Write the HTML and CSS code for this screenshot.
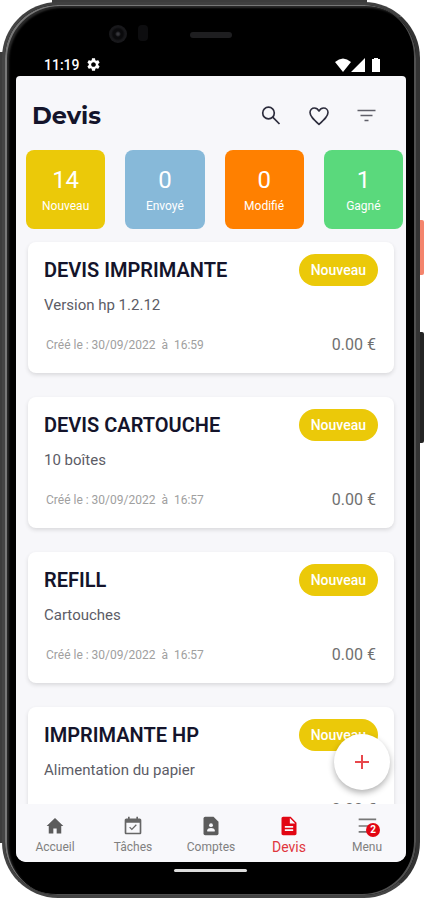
FILE: index.html
```html
<!DOCTYPE html>
<html lang="fr">
<head>
<meta charset="utf-8">
<meta name="viewport" content="width=device-width, initial-scale=1">
<title>Devis</title>
<link rel="stylesheet" href="styles.css">
</head>
<body>
<div class="device">
  <span class="side-key power"></span>
  <span class="side-key volume"></span>
  <div class="phone">
    <div class="bezel-top">
      <span class="camera"></span>
      <span class="sensor"></span>
      <span class="speaker"></span>
    </div>
    <div class="status">
      <span>11:19</span>
      <svg class="gear" viewBox="2 2 20 20" aria-hidden="true"><path fill="#fff" d="M19.14 12.94c.04-.3.06-.61.06-.94 0-.32-.02-.64-.07-.94l2.03-1.58c.18-.14.23-.41.12-.61l-1.92-3.32c-.12-.22-.37-.29-.59-.22l-2.39.96c-.5-.38-1.03-.7-1.62-.94l-.36-2.54c-.04-.24-.24-.41-.48-.41h-3.84c-.24 0-.43.17-.47.41l-.36 2.54c-.59.24-1.13.57-1.62.94l-2.39-.96c-.22-.08-.47 0-.59.22L2.74 8.87c-.12.21-.08.47.12.61l2.03 1.58c-.05.3-.09.63-.09.94s.02.64.07.94l-2.03 1.58c-.18.14-.23.41-.12.61l1.92 3.32c.12.22.37.29.59.22l2.39-.96c.5.38 1.03.7 1.62.94l.36 2.54c.05.24.24.41.48.41h3.84c.24 0 .44-.17.47-.41l.36-2.54c.59-.24 1.13-.56 1.62-.94l2.39.96c.22.08.47 0 .59-.22l1.92-3.32c.12-.22.07-.47-.12-.61l-2.01-1.58zM12 15.6c-1.980 0-3.600-1.620-3.600-3.600s1.620-3.600 3.600-3.600 3.600 1.620 3.600 3.600-1.620 3.600-3.600 3.600z"/></svg>
      <svg class="signals" viewBox="0 0 46 14" aria-hidden="true"><path fill="#fff" d="M0 4Q8-3 16 4L8 14zM30 0v14H16zM37 1h2V0h4v1h2v13h-8V1z"/></svg>
    </div>
    <div class="screen">
      <header class="bar">
        <h1>Devis</h1>
        <button type="button" class="tool" aria-label="Rechercher"><svg viewBox="0 0 24 24"><g fill="none" stroke="#2c2c3c" stroke-width="1.700"><circle cx="9.500" cy="9" r="5.800"/><path d="M13.700 13.200l6.800 6.800"/></g></svg></button>
        <button type="button" class="tool" aria-label="Favoris"><svg viewBox="0 0 24 24"><path fill="none" stroke="#2c2c3c" stroke-width="1.600" stroke-linejoin="round" d="M12 20.300C6.500 15.400 3 12.200 3 8.400 3 5.900 5 4 7.400 4 9.400 4 11 5.200 12 7c1-1.800 2.600-3 4.600-3C19 4 21 5.900 21 8.400c0 3.800-3.500 7-9 11.900z"/></svg></button>
        <button type="button" class="tool" aria-label="Filtrer"><svg viewBox="0 0 24 24"><path fill="none" stroke="#5f5f69" stroke-width="1.500" d="M2.500 6.500h18M5.500 11.500h12M9.500 16.500h4"/></svg></button>
      </header>
      <div class="tiles">
        <button type="button" class="tile yellow"><strong>14</strong><span>Nouveau</span></button>
        <button type="button" class="tile blue"><strong>0</strong><span>Envoyé</span></button>
        <button type="button" class="tile orange"><strong>0</strong><span>Modifié</span></button>
        <button type="button" class="tile green"><strong>1</strong><span>Gagné</span></button>
      </div>
      <main class="list">
        <article class="card">
          <div class="row"><h2>DEVIS IMPRIMANTE</h2><span class="pill">Nouveau</span></div>
          <p class="desc">Version hp 1.2.12</p>
          <div class="row foot"><span class="date">Créé le : 30/09/2022&nbsp; à&nbsp; 16:59</span><span class="price">0.00 €</span></div>
        </article>
        <article class="card">
          <div class="row"><h2>DEVIS CARTOUCHE</h2><span class="pill">Nouveau</span></div>
          <p class="desc">10 boîtes</p>
          <div class="row foot"><span class="date">Créé le : 30/09/2022&nbsp; à&nbsp; 16:57</span><span class="price">0.00 €</span></div>
        </article>
        <article class="card">
          <div class="row"><h2>REFILL</h2><span class="pill">Nouveau</span></div>
          <p class="desc">Cartouches</p>
          <div class="row foot"><span class="date">Créé le : 30/09/2022&nbsp; à&nbsp; 16:57</span><span class="price">0.00 €</span></div>
        </article>
        <article class="card">
          <div class="row"><h2>IMPRIMANTE HP</h2><span class="pill">Nouveau</span></div>
          <p class="desc">Alimentation du papier</p>
          <div class="row foot"><span></span><span class="price">0.00 €</span></div>
        </article>
      </main>
      <nav class="tabs">
        <button type="button" class="fab" aria-label="Ajouter un devis"><svg viewBox="0 0 16 16"><path fill="none" stroke="#e8474c" stroke-width="2" d="M8 1v14M1 8h14"/></svg></button>
        <a href="#accueil"><svg viewBox="0 0 24 24"><path fill="#5c5c5c" d="M10 21v-6h4v6h5.500v-9H22L12 2.500 2 12h2.500v9z"/></svg><span>Accueil</span></a>
        <a href="#taches"><svg viewBox="0 0 24 24"><path fill="#666" d="M16.530 11.060L15.470 10l-4.880 4.880-2.120-2.120-1.060 1.060L10.590 17l5.940-5.940zM20 3h-2V1h-2v2H8V1H6v2H4c-1.110 0-1.990.9-1.990 2L2 20c0 1.100.89 2 2 2h16c1.100 0 2-.9 2-2V5c0-1.100-.9-2-2-2zm0 17H4V8h16v12z"/></svg><span>Tâches</span></a>
        <a href="#comptes"><svg viewBox="0 0 24 24"><path fill="#5c5c5c" d="M5 1h10l6 6v14a2 2 0 0 1-2 2H5a2 2 0 0 1-2-2V3a2 2 0 0 1 2-2z"/><circle cx="12" cy="11" r="2.300" fill="#f8f8fb"/><path fill="#f8f8fb" d="M7.500 18.500v-1.400c0-1.700 2.500-2.700 4.500-2.700s4.500 1 4.500 2.700v1.400z"/></svg><span>Comptes</span></a>
        <a href="#devis" class="active"><svg viewBox="0 0 24 24"><path fill="#e20613" d="M14 1H5c-1.100 0-2 .9-2 2v18c0 1.100.89 2 2 2h14c1.100 0 2-.9 2-2V8l-7-7zm3 17H7v-2h10v2zm0-4H7v-2h10v2zm-4-5V2.500L19.500 9H13z"/></svg><span>Devis</span></a>
        <a href="#menu"><span class="badged"><svg viewBox="0 0 24 24"><path fill="#777" d="M2 3h21v2H2zm0 8h21v2H2zm0 7h16v2H2z"/></svg><b class="count">2</b></span><span>Menu</span></a>
      </nav>
    </div>
    <div class="gesture"><span></span></div>
  </div>
</div>
</body>
</html>
```
FILE: styles.css
```css
* {
  box-sizing: border-box;
}

body {
  margin: 0;
  background: #fff;
  font-family: Roboto, "Liberation Sans", sans-serif;
  color: #14142b;
}

h1, h2, p {
  margin: 0;
}

button {
  border: 0;
  padding: 0;
  font-family: inherit;
  background: none;
  cursor: pointer;
}

svg {
  display: block;
}

.device {
  position: relative;
  height: 100vh;
  padding: 2px 4px 2px 2px;
}

/* Edges of the casing that show behind the frame */
.device::before,
.device::after {
  content: "";
  position: absolute;
  background: #3c3c3c;
}

.device::before {
  left: 0;
  top: 52px;
  bottom: 57px;
  width: 40px;
}

.device::after {
  left: 52px;
  right: 57px;
  top: 0;
  height: 20px;
}

.side-key {
  position: absolute;
  right: 0;
  width: 8px;
  border-radius: 2px;
}

.power {
  top: 220px;
  height: 55px;
  background: #f4846c;
}

.volume {
  top: 332px;
  height: 111px;
  background: #242424;
}

.phone {
  position: relative;
  z-index: 1;
  height: 100%;
  display: flex;
  flex-direction: column;
  padding: 0 7px 0 7px;
  border: 3px solid #444;
  border-top-color: #404040;
  border-right: 4px solid #333;
  border-radius: 56px;
  background: #000;
  box-shadow: inset 2px 1px 0 #777, inset -2px -1px 0 #505050, inset 4px 3px 2px #2a2a2a;
}

.bezel-top {
  position: relative;
  flex: none;
  height: 48px;
}

.camera {
  position: absolute;
  left: 97px;
  top: 20px;
  width: 18px;
  height: 18px;
  border-radius: 50%;
  background: radial-gradient(circle, #37373c 0 1px, #0a0a0c 3px 5px, #18181b 7px);
}

.sensor {
  position: absolute;
  left: 126px;
  top: 20px;
  width: 10px;
  height: 16px;
  border-radius: 4px;
  background: #0d0d0f;
}

.speaker {
  position: absolute;
  top: 27px;
  left: 178px;
  width: 42px;
  height: 6px;
  border-radius: 3px;
  background: #1e1e20;
}

.status {
  flex: none;
  display: flex;
  align-items: center;
  gap: 7px;
  height: 23px;
  padding: 0 28px 0 32px;
  color: #fff;
  font-size: 14px;
  line-height: 20px;
  font-weight: 500;
}

.gear {
  width: 13px;
  height: 13px;
}

.signals {
  width: 46px;
  height: 14px;
  margin-left: auto;
}

.screen {
  flex: 1;
  min-height: 0;
  display: flex;
  flex-direction: column;
  margin-left: 4px;
  margin-right: 3px;
  border-radius: 4px 4px 10px 10px;
  background: #f7f7fa;
  overflow: hidden;
}

.bar {
  flex: none;
  display: flex;
  align-items: center;
  gap: 24px;
  height: 74px;
  padding: 5px 27px 0 16px;
}

.bar h1 {
  flex: 1;
  font-family: Montserrat, Inter, sans-serif;
  font-size: 24px;
  line-height: 32px;
  font-weight: 700;
}

.tool svg {
  width: 24px;
  height: 24px;
}

.tiles {
  flex: none;
  display: grid;
  grid-template-columns: repeat(4, 1fr);
  gap: 20px;
  padding: 0 3px 0 10px;
}

.tile {
  display: flex;
  flex-direction: column;
  align-items: center;
  justify-content: center;
  gap: 2px;
  height: 79px;
  padding-top: 2px;
  border-radius: 8px;
  color: #fff;
}

.tile strong {
  font-size: 24px;
  line-height: 28px;
  font-weight: 400;
}

.tile span {
  font-size: 12px;
  line-height: 20px;
  font-weight: 400;
}

.yellow { background: #ebc909; }
.blue { background: #87b9d9; }
.orange { background: #ff8000; }
.green { background: #5ad97c; }

.list {
  flex: 1;
  min-height: 0;
  overflow: hidden;
  display: flex;
  flex-direction: column;
  gap: 24px;
  padding: 13px 12px 0 12px;
}

.card {
  flex: none;
  padding: 12px 16px 16px;
  border-radius: 8px;
  background: #fff;
  box-shadow: 0 2px 4px rgba(0, 0, 0, 0.12);
}

.row {
  display: flex;
  align-items: center;
  justify-content: space-between;
}

.card h2 {
  font-size: 20px;
  line-height: 32px;
  font-weight: 600;
}

.pill {
  padding: 0 12px;
  border-radius: 16px;
  background: #ebc909;
  color: #fff;
  font-size: 14px;
  line-height: 32px;
  font-weight: 500;
}

.desc {
  margin-top: 9px;
  color: #5c5c66;
  font-size: 15px;
  line-height: 20px;
}

.foot {
  margin-top: 18px;
  padding: 0 2px;
}

.date {
  color: #a0a0a0;
  font-size: 12px;
  line-height: 24px;
}

.price {
  color: #707070;
  font-size: 16px;
  line-height: 24px;
}

.tabs {
  position: relative;
  flex: none;
  display: grid;
  grid-template-columns: repeat(5, 1fr);
  height: 58px;
  background: #f8f8fb;
}

.tabs a {
  display: flex;
  flex-direction: column;
  align-items: center;
  gap: 3px;
  padding-top: 12px;
  color: #808080;
  font-size: 12px;
  line-height: 16px;
  text-decoration: none;
}

.tabs a svg {
  width: 20px;
  height: 20px;
}

.tabs .active {
  color: #e0363d;
  font-size: 14px;
}

.badged {
  position: relative;
}

.count {
  position: absolute;
  left: 9px;
  top: 7px;
  width: 14px;
  height: 14px;
  border-radius: 50%;
  background: #e20613;
  color: #fff;
  font-size: 10px;
  line-height: 14px;
  font-weight: 700;
  text-align: center;
}

.fab {
  position: absolute;
  right: 16px;
  bottom: 72px;
  width: 56px;
  height: 56px;
  display: grid;
  place-items: center;
  border-radius: 50%;
  background: #fff;
  box-shadow: 0 3px 6px rgba(0, 0, 0, 0.3);
}

.fab svg {
  width: 16px;
  height: 16px;
}

.gesture {
  flex: none;
  height: 33px;
  padding-top: 7px;
}

.gesture span {
  display: block;
  width: 73px;
  height: 3px;
  margin: 0 auto;
  border-radius: 2px;
  background: #ddd;
}
```
